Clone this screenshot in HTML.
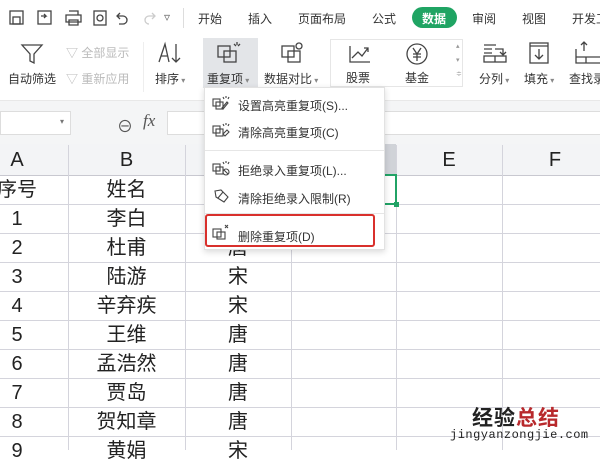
<!DOCTYPE html>
<html><head><meta charset="utf-8">
<style>
*{margin:0;padding:0;box-sizing:border-box}
body{width:600px;height:450px;overflow:hidden;background:#fff;position:relative;font-family:"Liberation Sans","Noto Sans CJK SC",sans-serif;color:#333}
.a{position:absolute}
.t{font-size:12px;color:#333;white-space:nowrap}
.g{color:#bbb}
svg{position:absolute;fill:none;stroke:#444;stroke-width:1.3}
.vl{position:absolute;top:145px;bottom:0;width:1px;background:#d4d4dc}
.hl{position:absolute;left:0;right:0;height:1px;background:#d4d4dc}
.c{position:absolute;font-size:20px;color:#222;text-align:center;line-height:29px;height:29px}
.mi{position:absolute;left:238px;font-size:12px;color:#333}
</style></head><body>
<!-- tab row -->
<div class="a" style="left:0;top:0;width:600px;height:35px;background:#fff"></div>
<svg style="left:8px;top:8px" width="160" height="20" viewBox="0 0 160 20">
<rect x="2" y="3" width="13" height="13"/><rect x="5" y="9" width="7" height="7"/>
<rect x="30" y="3" width="13" height="13"/><path d="M33 8h5l-2-2M38 8l-2 2"/>
<path d="M58 7h15v7h-15zM61 3h9v4M61 12h9v5h-9z"/>
<rect x="86" y="3" width="12" height="14"/><circle cx="92" cy="10" r="3"/>
<path d="M112 5l-3 3 3 3M109 8h6a4 4 0 0 1 0 8h-4"/>
<path stroke="#ccc" d="M144 5l3 3-3 3M147 8h-6a4 4 0 0 0 0 8"/>
</svg>
<div class="a t" style="left:164px;top:10px;color:#666">▿</div>
<div class="a" style="left:183px;top:8px;width:1px;height:20px;background:#ddd"></div>
<div class="a t" style="left:198px;top:10px">开始</div>
<div class="a t" style="left:248px;top:10px">插入</div>
<div class="a t" style="left:298px;top:10px">页面布局</div>
<div class="a t" style="left:372px;top:10px">公式</div>
<div class="a" style="left:412px;top:7px;width:45px;height:21px;border-radius:11px;background:#1fa463"></div>
<div class="a t" style="left:422px;top:10px;color:#fff;font-weight:bold">数据</div>
<div class="a t" style="left:472px;top:10px">审阅</div>
<div class="a t" style="left:522px;top:10px">视图</div>
<div class="a t" style="left:572px;top:10px">开发工具</div>
<!-- ribbon -->
<svg style="left:20px;top:42px" width="24" height="24" viewBox="0 0 24 24"><path d="M2 3h20l-8 9v9l-4-2v-7z"/></svg>
<div class="a t" style="left:8px;top:70px">自动筛选</div>
<div class="a t g" style="left:66px;top:44px">▽ 全部显示</div>
<div class="a t g" style="left:66px;top:70px">▽ 重新应用</div>
<div class="a" style="left:143px;top:42px;width:1px;height:50px;background:#eee"></div>
<svg style="left:156px;top:41px" width="28" height="24" viewBox="0 0 28 24"><path d="M3 21l6-18 4 18M5 15h7M20 3v18M16 17l4 4 4-4"/></svg>
<div class="a t" style="left:155px;top:70px">排序<span style="font-size:8px;color:#888"> ▾</span></div>
<div class="a" style="left:203px;top:38px;width:55px;height:50px;background:#e3e5e8"></div>
<svg style="left:216px;top:40px" width="28" height="24" viewBox="0 0 28 24"><rect x="2" y="6" width="12" height="11"/><rect x="8" y="11" width="12" height="11"/><path d="M21 2v3M18 4l2 2M24 4l-2 2"/></svg>
<div class="a t" style="left:207px;top:70px">重复项<span style="font-size:8px;color:#888"> ▾</span></div>
<svg style="left:280px;top:40px" width="28" height="24" viewBox="0 0 28 24"><rect x="2" y="6" width="12" height="11"/><rect x="8" y="11" width="12" height="11"/><circle cx="19" cy="6" r="3"/></svg>
<div class="a t" style="left:264px;top:70px">数据对比<span style="font-size:8px;color:#888"> ▾</span></div>
<div class="a" style="left:330px;top:39px;width:133px;height:48px;border:1px solid #e6e6e6"></div>
<svg style="left:348px;top:44px" width="24" height="20" viewBox="0 0 24 20"><path d="M2 2v16h20M4 14l6-6 4 4 6-8M16 4h4v4"/></svg>
<div class="a t" style="left:346px;top:69px">股票</div>
<svg style="left:405px;top:42px" width="24" height="24" viewBox="0 0 24 24"><circle cx="12" cy="12" r="10"/><path d="M8 6l4 6 4-6M12 12v7M8 12h8M8 15h8"/></svg>
<div class="a t" style="left:405px;top:69px">基金</div>
<div class="a" style="left:456px;top:40px;font-size:7px;color:#999;line-height:14px">▴<br>▾<br>≑</div>
<svg style="left:482px;top:42px" width="26" height="22" viewBox="0 0 26 22"><path d="M2 3h12M2 7h8M2 11h8M13 7h8v5M18 10l3 3 3-3"/><rect x="2" y="14" width="22" height="6"/><path d="M13 14v6"/></svg>
<div class="a t" style="left:479px;top:70px">分列<span style="font-size:8px;color:#888"> ▾</span></div>
<svg style="left:528px;top:41px" width="22" height="24" viewBox="0 0 22 24"><rect x="2" y="2" width="18" height="20"/><path d="M2 5h18M11 8v10M7 14l4 4 4-4"/></svg>
<div class="a t" style="left:524px;top:70px">填充<span style="font-size:8px;color:#888"> ▾</span></div>
<svg style="left:574px;top:41px" width="26" height="24" viewBox="0 0 26 24"><path d="M2 8v14h24M7 4l3-3 3 3M10 1v9M2 16h24M12 16v6"/></svg>
<div class="a t" style="left:569px;top:70px">查找录入</div>
<!-- formula bar -->
<div class="a" style="left:0;top:100px;width:600px;height:44px;background:#f4f5f6;border-top:1px solid #e8e8e8"></div>
<div class="a" style="left:0;top:111px;width:71px;height:24px;background:#fff;border:1px solid #ddd"></div>
<div class="a" style="left:60px;top:117px;font-size:8px;color:#777">▾</div>
<div class="a" style="left:117px;top:113px;font-size:16px;color:#555">⊖</div>
<div class="a" style="left:143px;top:111px;font-size:17px;color:#555;font-style:italic;font-family:'Liberation Serif',serif">fx</div>
<div class="a" style="left:167px;top:111px;width:440px;height:24px;background:#fff;border:1px solid #ddd"></div>
<!-- header row -->
<div class="a" style="left:0;top:144px;width:600px;height:31px;background:#f3f4f6"></div>
<div class="a" style="left:380px;top:144px;width:16px;height:31px;background:#d0d3d8"></div>
<div class="c" style="left:0;top:146px;width:34px">A</div>
<div class="c" style="left:68px;top:146px;width:117px">B</div>
<div class="c" style="left:396px;top:146px;width:106px">E</div>
<div class="c" style="left:502px;top:146px;width:106px">F</div>
<div class="hl" style="top:175px;background:#c8c8d0"></div>
<div class="hl" style="top:204px"></div><div class="hl" style="top:233px"></div><div class="hl" style="top:262px"></div><div class="hl" style="top:291px"></div><div class="hl" style="top:320px"></div><div class="hl" style="top:349px"></div><div class="hl" style="top:378px"></div><div class="hl" style="top:407px"></div><div class="hl" style="top:436px"></div>
<div class="vl" style="left:68px"></div><div class="vl" style="left:185px"></div><div class="vl" style="left:291px"></div><div class="vl" style="left:396px"></div><div class="vl" style="left:502px"></div>
<!-- cells -->
<div class="c" style="left:-8px;top:176px;width:50px">序号</div><div class="c" style="left:68px;top:176px;width:117px">姓名</div>
<div class="c" style="left:0;top:205px;width:34px">1</div><div class="c" style="left:68px;top:205px;width:117px">李白</div><div class="c" style="left:185px;top:205px;width:106px">唐</div>
<div class="c" style="left:0;top:234px;width:34px">2</div><div class="c" style="left:68px;top:234px;width:117px">杜甫</div><div class="c" style="left:185px;top:234px;width:106px">唐</div>
<div class="c" style="left:0;top:263px;width:34px">3</div><div class="c" style="left:68px;top:263px;width:117px">陆游</div><div class="c" style="left:185px;top:263px;width:106px">宋</div>
<div class="c" style="left:0;top:292px;width:34px">4</div><div class="c" style="left:68px;top:292px;width:117px">辛弃疾</div><div class="c" style="left:185px;top:292px;width:106px">宋</div>
<div class="c" style="left:0;top:321px;width:34px">5</div><div class="c" style="left:68px;top:321px;width:117px">王维</div><div class="c" style="left:185px;top:321px;width:106px">唐</div>
<div class="c" style="left:0;top:350px;width:34px">6</div><div class="c" style="left:68px;top:350px;width:117px">孟浩然</div><div class="c" style="left:185px;top:350px;width:106px">唐</div>
<div class="c" style="left:0;top:379px;width:34px">7</div><div class="c" style="left:68px;top:379px;width:117px">贾岛</div><div class="c" style="left:185px;top:379px;width:106px">唐</div>
<div class="c" style="left:0;top:408px;width:34px">8</div><div class="c" style="left:68px;top:408px;width:117px">贺知章</div><div class="c" style="left:185px;top:408px;width:106px">唐</div>
<div class="c" style="left:0;top:437px;width:34px">9</div><div class="c" style="left:68px;top:437px;width:117px">黄娟</div><div class="c" style="left:185px;top:437px;width:106px">宋</div>
<!-- selection -->
<div class="a" style="left:290px;top:174px;width:107px;height:31px;border:2px solid #21a366"></div>
<div class="a" style="left:394px;top:202px;width:5px;height:5px;background:#21a366"></div>
<!-- menu -->
<div class="a" style="left:204px;top:87px;width:181px;height:163px;background:#fff;border:1px solid #e2e2e2;box-shadow:0 2px 6px rgba(0,0,0,.15)"></div>
<div class="a" style="left:205px;top:150px;width:179px;height:1px;background:#e6e6e6"></div>
<div class="a" style="left:205px;top:213px;width:179px;height:1px;background:#e6e6e6"></div>
<svg style="left:212px;top:95px;stroke-width:1.1" width="18" height="16" viewBox="0 0 18 16"><rect x="1" y="4" width="7" height="7"/><rect x="4" y="7" width="7" height="7"/><path d="M10 13l5-6 1 1-5 6zM14 1v2M11 2l1 2M17 2l-1 2"/></svg>
<div class="mi" style="top:97px">设置高亮重复项(S)...</div>
<svg style="left:212px;top:122px;stroke-width:1.1" width="18" height="16" viewBox="0 0 18 16"><rect x="1" y="4" width="7" height="7"/><rect x="4" y="7" width="7" height="7"/><path d="M11 12l4-4 2 2-4 4zM14 1v2M11 2l1 2M17 2l-1 2"/></svg>
<div class="mi" style="top:124px">清除高亮重复项(C)</div>
<svg style="left:212px;top:160px;stroke-width:1.1" width="18" height="16" viewBox="0 0 18 16"><rect x="1" y="4" width="7" height="7"/><rect x="4" y="7" width="7" height="7"/><circle cx="14" cy="12" r="3"/><path d="M12 10l4 4M14 1v2M11 2l1 2M17 2l-1 2"/></svg>
<div class="mi" style="top:162px">拒绝录入重复项(L)...</div>
<svg style="left:212px;top:188px;stroke-width:1.1" width="18" height="16" viewBox="0 0 18 16"><path d="M3 3l6-1 7 7-4 5-8-5zM6 10l5-6"/></svg>
<div class="mi" style="top:190px">清除拒绝录入限制(R)</div>
<div class="a" style="left:205px;top:214px;width:170px;height:33px;border:2px solid #d9302c;border-radius:3px"></div>
<svg style="left:212px;top:224px;stroke-width:1.1" width="18" height="16" viewBox="0 0 18 16"><rect x="1" y="5" width="8" height="8"/><rect x="5" y="8" width="8" height="7"/><path d="M13 1l3 3M16 1l-3 3"/></svg>
<div class="mi" style="top:228px">删除重复项(D)</div>
<!-- watermark -->
<div class="a" style="left:472px;top:402px;font-size:21px;font-weight:bold;letter-spacing:1px"><span style="color:#222">经验</span><span style="color:#b8292c">总结</span></div>
<div class="a" style="left:450px;top:428px;font-size:12px;color:#222;font-family:'Liberation Mono',monospace;letter-spacing:0.5px">jingyanzongjie.com</div>
</body></html>
